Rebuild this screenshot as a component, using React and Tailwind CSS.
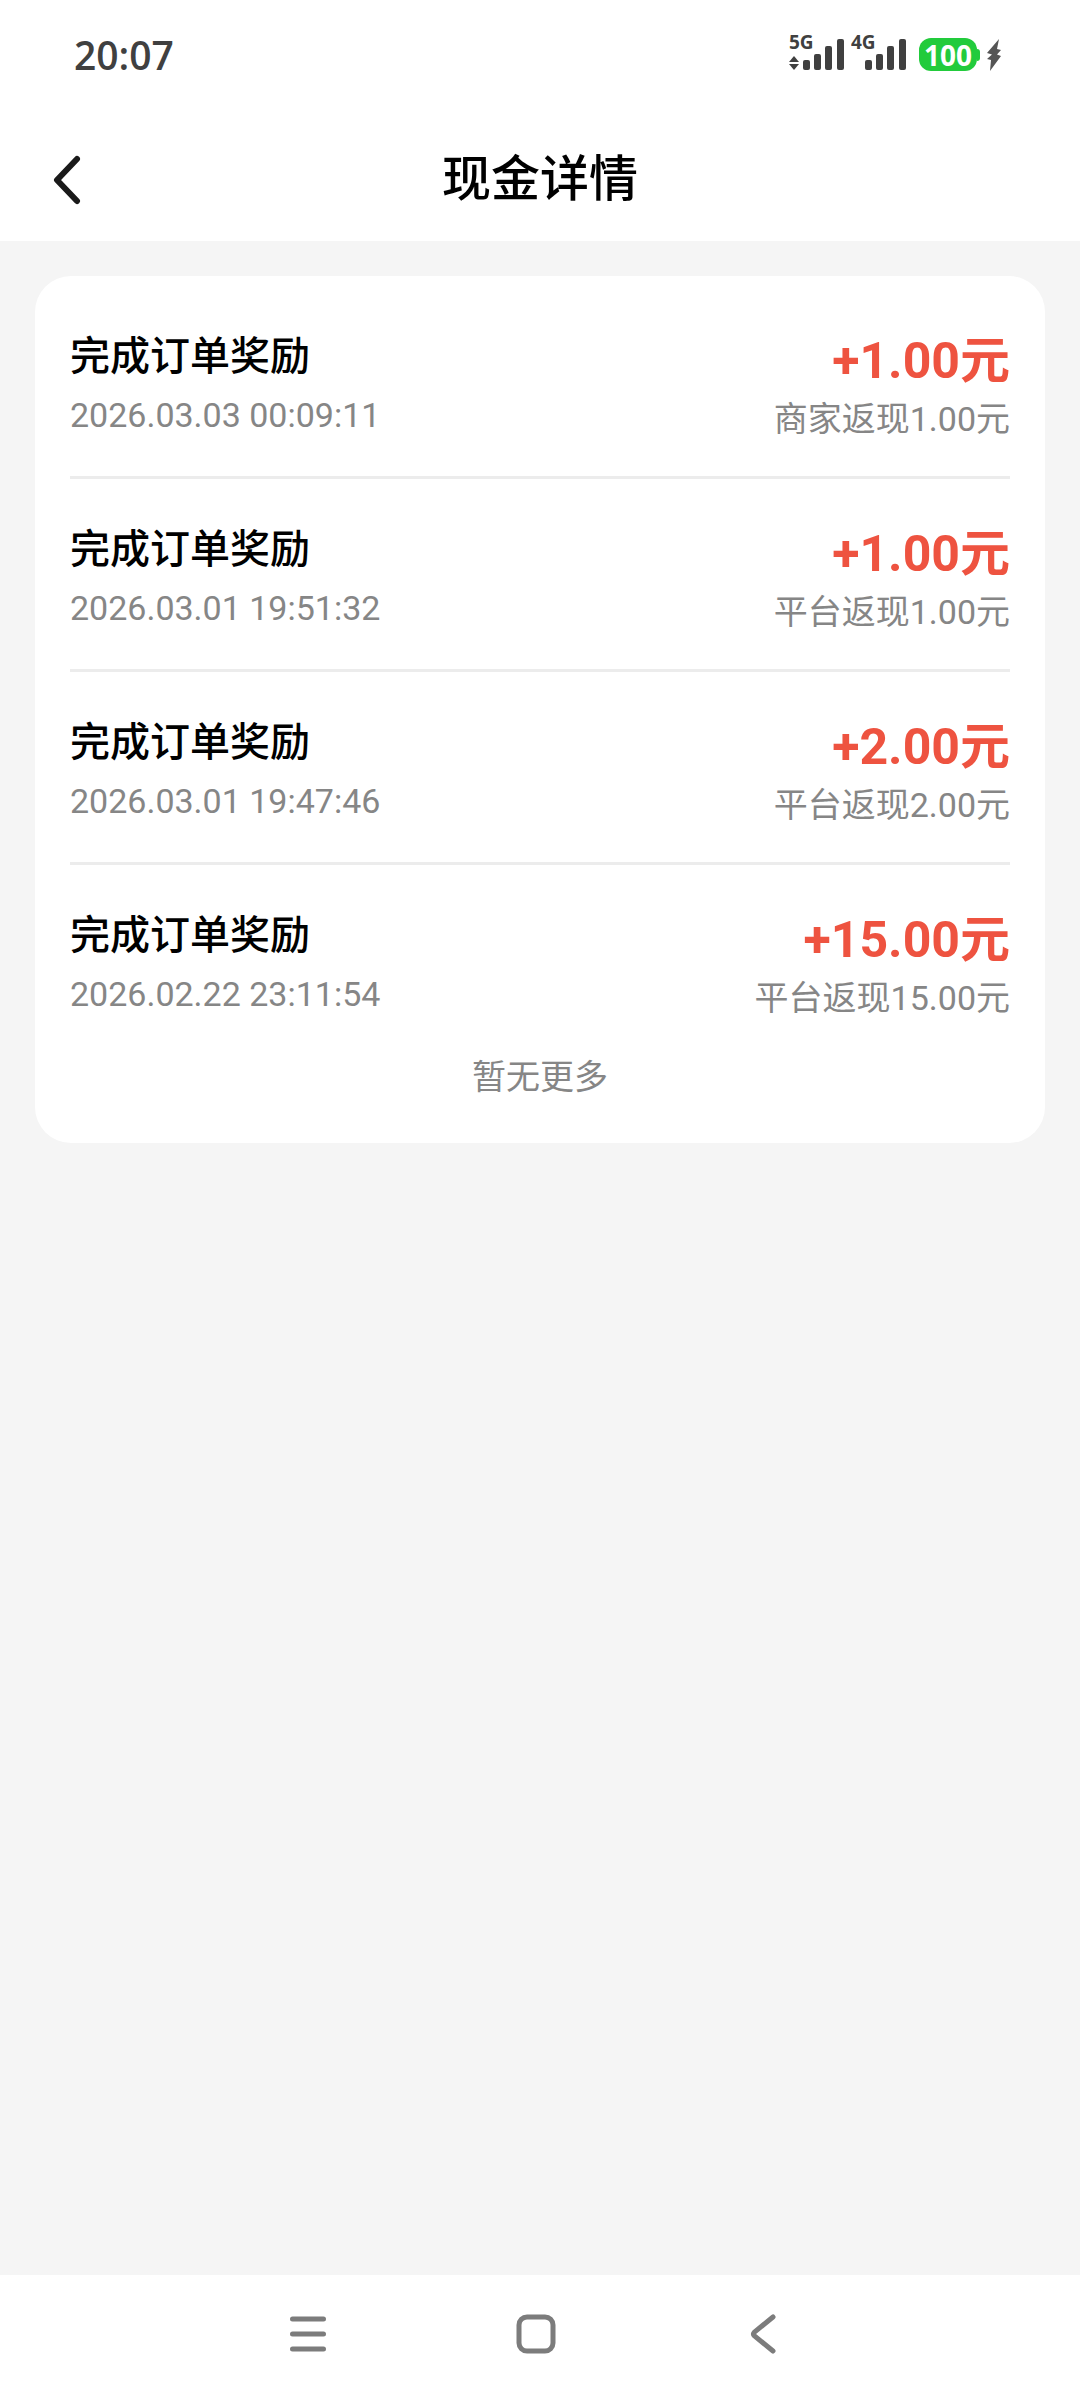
const records = [
  {
    id: 1,
    title: "完成订单奖励",
    time: "2026.03.03 00:09:11",
    amount: "1.00",
    source: "商家返现",
  },
  {
    id: 2,
    title: "完成订单奖励",
    time: "2026.03.01 19:51:32",
    amount: "1.00",
    source: "平台返现",
  },
  {
    id: 3,
    title: "完成订单奖励",
    time: "2026.03.01 19:47:46",
    amount: "2.00",
    source: "平台返现",
  },
  {
    id: 4,
    title: "完成订单奖励",
    time: "2026.02.22 23:11:54",
    amount: "15.00",
    source: "平台返现",
  },
]

function Signal({ label, data }) {
  return (
    <svg width="56" height="46" viewBox="0 -10 56 46" fill="#404040">
      <text
        x="0"
        y="14"
        fontSize="19"
        fontWeight="700"
        className="font-['Open_Sans',sans-serif]"
      >
        {label}
      </text>
      {data && (
        <>
          <path d="M5 21l5 6H0z" />
          <path d="M5 35l5-6H0z" />
        </>
      )}
      <rect x="14" y="25" width="7" height="10" rx="2" />
      <rect x="25" y="19" width="7" height="16" rx="2" />
      <rect x="36" y="11" width="7" height="24" rx="2" />
      <rect x="48" y="4" width="7" height="31" rx="2" />
    </svg>
  )
}

function StatusBar() {
  return (
    <div className="flex h-[108px] items-center justify-between pl-[74px] pr-[78px]">
      <span className="font-['Open_Sans',sans-serif] text-[39px] font-semibold leading-none text-[#404040]">
        20:07
      </span>
      <div className="flex items-end pb-3">
        <Signal label="5G" data />
        <div className="ml-1.5">
          <Signal label="4G" />
        </div>
        <div className="ml-3 flex items-center">
          <span className="flex h-[33px] w-[58px] items-center justify-center rounded-xl bg-[#22cb3c] font-['Open_Sans',sans-serif] text-[28px] font-bold leading-none text-white">
            100
          </span>
          <span className="h-3 w-[3px] rounded-r-sm bg-[#22cb3c]" />
        </div>
        <svg className="ml-1.5" width="16" height="32" viewBox="0 0 16 32">
          <path
            d="M13 0L1 14l5 1.500-5 4.500 4 1-1 11L15 17l-4-1.500 4-4.500-4-1z"
            fill="#555"
          />
        </svg>
      </div>
    </div>
  )
}

function Header() {
  return (
    <header className="grid h-[133px] grid-cols-[1fr_auto_1fr] items-center px-12 pt-2.5">
      <button
        aria-label="返回"
        className="flex h-16 w-16 items-center justify-start pl-1"
      >
        <svg width="30" height="50" viewBox="0 0 30 50" fill="none">
          <path
            d="M25 4L5 25l20 21"
            stroke="#1a1a1a"
            strokeWidth="6"
            strokeLinecap="round"
            strokeLinejoin="round"
          />
        </svg>
      </button>
      <h1 className="text-[49px] font-medium leading-[64px] text-black">
        现金详情
      </h1>
    </header>
  )
}

function Record({ item }) {
  return (
    <li className="flex h-[193px] justify-between border-b-[3px] border-[#ececec] pt-[45px] last:h-[172px] last:border-b-0">
      <div>
        <h2 className="text-[40px] font-medium leading-[52px] text-black">
          {item.title}
        </h2>
        <p className="mt-2.5 text-[34px] leading-[44px] text-[#868686]">
          {item.time}
        </p>
      </div>
      <div className="text-right">
        <p className="text-[50px] font-bold leading-[60px] text-[#ee5340]">
          +{item.amount}元
        </p>
        <p className="mt-1.5 text-[34px] leading-[44px] text-[#868686]">
          {item.source}
          {item.amount}元
        </p>
      </div>
    </li>
  )
}

function NavBar() {
  return (
    <nav className="flex h-[125px] items-center justify-center gap-[148px] bg-white pb-2 pr-2">
      <button
        aria-label="最近任务"
        className="flex h-20 w-20 items-center justify-center"
      >
        <svg
          width="36"
          height="36"
          viewBox="0 0 36 36"
          stroke="#7c7c7c"
          strokeWidth="5"
          strokeLinecap="round"
        >
          <path d="M2.500 3h31M2.500 18h31M2.500 33h31" />
        </svg>
      </button>
      <button
        aria-label="主屏幕"
        className="flex h-20 w-20 items-center justify-center"
      >
        <svg width="40" height="40" viewBox="0 0 40 40" fill="none">
          <rect
            x="3"
            y="3"
            width="34"
            height="34"
            rx="8"
            stroke="#7c7c7c"
            strokeWidth="5"
          />
        </svg>
      </button>
      <button
        aria-label="返回上一页"
        className="flex h-20 w-20 items-center justify-center"
      >
        <svg width="28" height="40" viewBox="0 0 28 40" fill="none">
          <path
            d="M23 3L4.500 18q-2 2 0 4L23 37"
            stroke="#7c7c7c"
            strokeWidth="5"
            strokeLinecap="round"
          />
        </svg>
      </button>
    </nav>
  )
}

export default function App() {
  return (
    <div className="flex min-h-screen flex-col bg-[#f5f5f5] font-['Roboto','Noto_Sans_CJK_SC',sans-serif]">
      <div className="bg-white">
        <StatusBar />
        <Header />
      </div>
      <main className="flex-1 px-[35px] pt-[35px]">
        <section className="rounded-[36px] bg-white px-[35px] pb-10 pt-[10px]">
          <ul>
            {records.map((item) => (
              <Record key={item.id} item={item} />
            ))}
          </ul>
          <p className="mt-3.5 text-center text-[34px] leading-[52px] text-[#868686]">
            暂无更多
          </p>
        </section>
      </main>
      <NavBar />
    </div>
  )
}
